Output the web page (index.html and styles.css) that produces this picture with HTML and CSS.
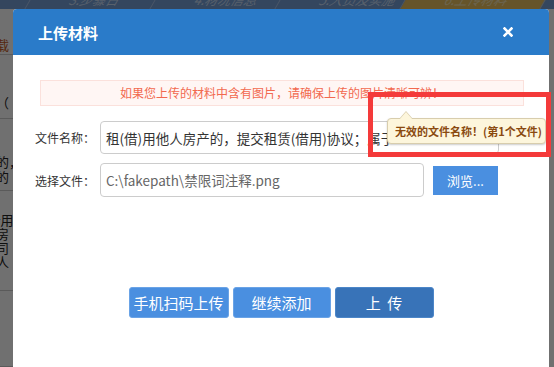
FILE: index.html
```html
<!DOCTYPE html>
<html lang="zh-CN">
<head>
    <meta charset="UTF-8">
    <meta name="viewport" content="width=device-width, initial-scale=1.0">
    <title>上传材料</title>
    <link rel="stylesheet" href="styles.css">
</head>
<body>
    <!-- page behind the dialog -->
    <div class="page">
        <nav class="steps">
            <span class="step step-first"></span>
            <span class="step">3.步骤日</span>
            <span class="step">4.材况信息</span>
            <span class="step">5.人员及实施</span>
            <span class="step step-active">6.上传材料</span>
        </nav>
        <div class="doc">
            <div class="row row-a"><span class="link">不下载</span></div>
            <div class="row row-b">执行（</div>
            <div class="row row-c">提交的，<br>相关的</div>
            <div class="row row-d">租(借用)协<br>借用房<br>的公司<br>代表人</div>
            <div class="row row-e">、<br>其中<br>营业<br>单位</div>
        </div>
    </div>

    <div class="mask"></div>

    <div class="dialog">
        <header class="dialog-head">
            <h1 class="dialog-title">上传材料</h1>
            <svg class="close" width="10" height="10" viewBox="0 0 10 10">
                <path d="M1.5 1.5 L8.5 8.5 M8.5 1.5 L1.5 8.5" stroke="#fff" stroke-width="2.6" stroke-linecap="square"/>
            </svg>
        </header>
        <div class="dialog-body">
            <p class="notice">如果您上传的材料中含有图片，请确保上传的图片清晰可辨！</p>
            <div class="form">
                <div class="field">
                    <label class="label">文件名称：</label>
                    <div class="input input-name">租(借)用他人房产的，提交租赁(借用)协议；属于</div>
                </div>
                <div class="field">
                    <label class="label">选择文件：</label>
                    <div class="input input-file">C:\fakepath\禁限词注释.png</div>
                    <button class="browse">浏览...</button>
                </div>
                <div class="tip">无效的文件名称！(第1个文件)</div>
            </div>
        </div>
        <div class="actions">
            <button class="btn btn-scan">手机扫码上传</button>
            <button class="btn btn-add">继续添加</button>
            <button class="btn btn-upload">上&nbsp;&nbsp;传</button>
        </div>
    </div>

    <div class="mark"></div>
</body>
</html>
```

FILE: styles.css
```css
/* Reset */
* {
    margin: 0;
    padding: 0;
    box-sizing: border-box;
}

body {
    font-family: "Noto Sans CJK SC", "Noto Sans", sans-serif;
    width: 554px;
    height: 367px;
    overflow: hidden;
    position: relative;
    background: #fff;
    color: #333;
}

/* Background page */
.page {
    height: 367px;
    overflow: hidden;
}

.steps {
    height: 9px;
    display: flex;
    background: #769fd6;
    overflow: hidden;
}

.step {
    width: 125px;
    flex-shrink: 0;
    font-size: 13px;
    line-height: 13px;
    margin-top: -7px;
    padding-left: 40px;
    color: #c9dcf5;
    border-right: 1px solid #a9c4ea;
    transform: skewX(-30deg);
}

.step-first {
    width: 30px;
    padding: 0;
}

.step-active {
    width: 140px;
    background: #e8c060;
    color: #f6e4b4;
}

.doc {
    margin-left: -30px;
    width: 60px;
    font-size: 13px;
    line-height: 15px;
    color: #222;
}

.row {
    border-bottom: 1px solid #ccc;
    white-space: nowrap;
    overflow: hidden;
}

.row-a {
    height: 46px;
    padding-top: 28px;
}

.link {
    color: #c45a1e;
}

.row-b {
    height: 64px;
    padding-top: 40px;
}

.row-c {
    height: 72px;
    padding-top: 35px;
}

.row-d {
    height: 100px;
    padding-top: 22px;
    line-height: 14px;
}

.row-e {
    height: 76px;
    padding-top: 8px;
    line-height: 14px;
}

.mask {
    position: absolute;
    inset: 0;
    background: rgba(0, 0, 0, 0.56);
}

/* Dialog */
.dialog {
    position: absolute;
    left: 13px;
    top: 9px;
    bottom: 0;
    width: 536px;
    background: #fff;
    border-radius: 4px 4px 0 0;
    overflow: hidden;
}

.dialog-head {
    height: 46px;
    background: #2a7bc9;
    display: flex;
    align-items: center;
    justify-content: space-between;
    padding: 0 36px 0 25px;
    color: #fff;
}

.dialog-title {
    font-size: 15px;
    font-weight: bold;
}

.dialog-body {
    padding: 25px 25px 0 22px;
}

.notice {
    margin-left: 5px;
    height: 26px;
    border: 1px solid #fbe1dc;
    background: #fff6f4;
    color: #f2694f;
    font-size: 12px;
    line-height: 24px;
    text-align: center;
}

.form {
    margin-top: 15px;
    display: flex;
    flex-direction: column;
    gap: 9px;
    position: relative;
}

.field {
    display: flex;
    align-items: center;
}

.label {
    width: 65px;
    font-size: 12px;
    color: #333;
}

.input {
    height: 33px;
    border: 1px solid #ccc;
    border-radius: 4px;
    padding: 0 5px;
    font-size: 13.5px;
    display: flex;
    align-items: center;
    white-space: nowrap;
    overflow: hidden;
    color: #333;
}

.input-name {
    width: 399px;
}

.input-file {
    width: 324px;
    height: 34px;
    color: #666;
}

.browse {
    margin-left: 9px;
    width: 65px;
    height: 29px;
    border: none;
    background: #4a8fe0;
    color: #fff;
    font-family: inherit;
    font-size: 13px;
}

/* Validation tooltip */
.tip {
    position: absolute;
    left: 352px;
    top: -3px;
    width: 159px;
    height: 26px;
    padding: 0 7px;
    background: #fdf6dc;
    border: 1px solid #d8cdad;
    border-radius: 4px;
    box-shadow: 0 1px 2px rgba(0, 0, 0, 0.2);
    color: #8a4a10;
    font-size: 11px;
    font-weight: bold;
    line-height: 24px;
    white-space: nowrap;
}

.tip::before,
.tip::after {
    content: "";
    position: absolute;
    left: 11px;
    border: 7px solid transparent;
    border-top: none;
}

.tip::before {
    top: -8px;
    border-bottom: 8px solid #d8cdad;
}

.tip::after {
    top: -7px;
    border-bottom: 8px solid #fdf6dc;
}

/* Buttons */
.actions {
    margin-top: 90px;
    display: flex;
    justify-content: center;
    gap: 4px;
}

.btn {
    height: 31px;
    border: 1px solid #6aa3e6;
    border-radius: 3px;
    background: #4a8fe0;
    color: #fff;
    font-family: inherit;
    font-size: 15px;
}

.btn-scan {
    width: 100px;
}

.btn-add {
    width: 98px;
}

.btn-upload {
    width: 99px;
    background: #3873b8;
    border-color: #4c86c8;
}

/* Red annotation box */
.mark {
    position: absolute;
    left: 368px;
    top: 92px;
    width: 183px;
    height: 65px;
    border: 5px solid #f43a3a;
}
```
